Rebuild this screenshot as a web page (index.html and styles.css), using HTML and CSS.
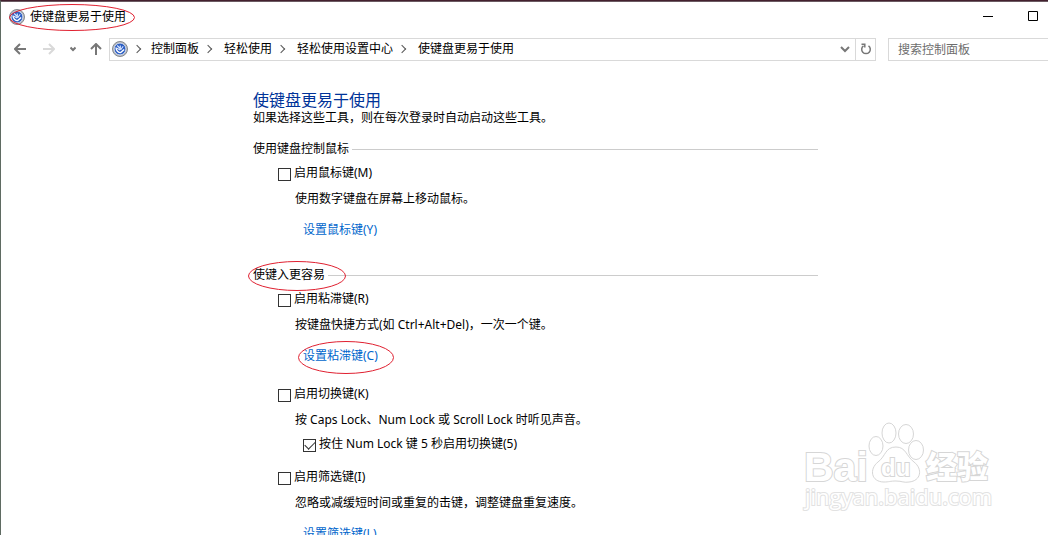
FILE: index.html
```
<!DOCTYPE html>
<html lang="zh-CN">
  <head>
    <meta charset="UTF-8" />
    <meta name="viewport" content="width=device-width, initial-scale=1.0" />
    <title>使键盘更易于使用</title>
    <link rel="stylesheet" href="styles.css">
  </head>
  <body>
    <!-- Shared icon -->
    <svg class="symbols" aria-hidden="true">
      <symbol id="ease" viewBox="0 0 16 16">
        <circle cx="8" cy="8" r="7.5" fill="#b4b8bd" stroke="#85898f" />
        <circle cx="8" cy="8" r="5.9" fill="#2d5fc4" stroke="#e4eaf5" stroke-width="0.8" />
        <path d="M4 6.5c.3 3.2 2.2 5.1 5 5.1M8.8 11.600l3.300-3.200" fill="none" stroke="#fff" stroke-width="1.400" />
        <path d="M5.200 4.500l3 3M8.300 4.500v4M4.900 7.200l3.300 1.800M11.200 5.200L8.700 8.700" fill="none" stroke="#dce8ff" stroke-width="1.100" />
      </symbol>
    </svg>

    <div class="window">
      <header class="titlebar">
        <div class="window-title marked">
          <svg class="icon"><use href="#ease" /></svg>
          <span>使键盘更易于使用</span>
          <svg class="mark mark-title" viewBox="0 0 126 27" preserveAspectRatio="none"><ellipse cx="63" cy="13.500" rx="62.500" ry="13" /></svg>
        </div>
        <div class="window-buttons">
          <button type="button" aria-label="最小化"><svg width="10" height="10"><path d="M0 5.500h10" /></svg></button>
          <button type="button" aria-label="最大化"><svg width="10" height="10"><path d="M.5.500h9v9h-9z" /></svg></button>
        </div>
      </header>

      <nav class="navbar">
        <button type="button" class="nav-back" aria-label="后退"><svg width="12" height="12"><path d="M12 6H1M6 1L1 6l5 5" /></svg></button>
        <button type="button" class="nav-forward" aria-label="前进"><svg width="12" height="12"><path d="M0 6h11M6 1l5 5-5 5" /></svg></button>
        <button type="button" class="nav-recent" aria-label="最近浏览的位置"><svg width="6" height="6"><path d="M.5 1.500L3 4l2.500-2.500" /></svg></button>
        <button type="button" class="nav-up" aria-label="上移"><svg width="12" height="12"><path d="M6 12V1M1 6l5-5 5 5" /></svg></button>

        <div class="address">
          <svg class="icon"><use href="#ease" /></svg>
          <ol class="crumbs">
            <li><a href="#">控制面板</a></li>
            <li><a href="#">轻松使用</a></li>
            <li><a href="#">轻松使用设置中心</a></li>
            <li><a href="#">使键盘更易于使用</a></li>
          </ol>
          <button type="button" class="history" aria-label="以前的位置"><svg width="10" height="8"><path d="M1 2l4 4 4-4" /></svg></button>
          <button type="button" class="refresh" aria-label="刷新"><svg width="12" height="12"><path d="M8.500 2.800A4.300 4.300 0 1 1 3.500 2.800M1.500 1.200h3.300v3.300" /></svg></button>
        </div>
        <input type="text" class="search" placeholder="搜索控制面板" aria-label="搜索控制面板" />
      </nav>

      <main class="content">
        <h1>使键盘更易于使用</h1>
        <p class="intro">如果选择这些工具，则在每次登录时自动启动这些工具。</p>

        <section>
          <h2><span>使用键盘控制鼠标</span></h2>
          <label class="option"><input type="checkbox" />启用鼠标键(M)</label>
          <p class="desc">使用数字键盘在屏幕上移动鼠标。</p>
          <a class="setup" href="#">设置鼠标键(Y)</a>
        </section>

        <section>
          <h2 class="marked">
            <span>使键入更容易</span>
            <svg class="mark mark-heading" viewBox="0 0 98 30" preserveAspectRatio="none"><ellipse cx="49" cy="15" rx="48.500" ry="14.500" /></svg>
          </h2>
          <label class="option"><input type="checkbox" />启用粘滞键(R)</label>
          <p class="desc">按键盘快捷方式(如 Ctrl+Alt+Del)，一次一个键。</p>
          <a class="setup marked" href="#">设置粘滞键(C)
            <svg class="mark mark-link" viewBox="0 0 96 33" preserveAspectRatio="none"><ellipse cx="48" cy="16.500" rx="47.500" ry="16" /></svg>
          </a>

          <label class="option next"><input type="checkbox" />启用切换键(K)</label>
          <p class="desc">按 Caps Lock、Num Lock 或 Scroll Lock 时听见声音。</p>
          <label class="option sub"><input type="checkbox" checked />按住 Num Lock 键 5 秒启用切换键(5)</label>

          <label class="option after-sub"><input type="checkbox" />启用筛选键(I)</label>
          <p class="desc">忽略或减缓短时间或重复的击键，调整键盘重复速度。</p>
          <a class="setup" href="#">设置筛选键(L)</a>
        </section>
      </main>

      <!-- Watermark -->
      <svg class="watermark" width="200" height="100" viewBox="0 0 200 100" role="img" aria-label="Baidu 经验 jingyan.baidu.com">
        <text class="wm-latin" x="3" y="61">Bai</text>
        <ellipse cx="75" cy="26" rx="7" ry="9.500" />
        <ellipse cx="88" cy="13" rx="7" ry="10" />
        <ellipse cx="105" cy="14" rx="7.500" ry="9.500" />
        <ellipse cx="115" cy="30" rx="7.500" ry="9.500" />
        <path d="M95 27c-11 0-10 9-18 15-9 7-7 20 6 20 5 0 6-1 12-1s8 2 13 1c12-1 14-13 5-20-8-6-8-15-18-15z" />
        <text class="wm-du" x="80" y="56">du</text>
        <text class="wm-cjk" x="125" y="58">经验</text>
        <text class="wm-url" x="4" y="85">jingyan.baidu.com</text>
      </svg>
    </div>
  </body>
</html>
```
FILE: styles.css
```
* {
  box-sizing: border-box;
}

body {
  margin: 0;
  font-family: "Noto Sans", "Noto Sans CJK SC", sans-serif;
  font-size: 12px;
  line-height: 16px;
  color: #000;
  background-color: #fff;
}

h1,
h2,
p,
ol {
  margin: 0;
  padding: 0;
  font-weight: normal;
}

a {
  text-decoration: none;
}

button {
  display: flex;
  align-items: center;
  justify-content: center;
  padding: 0;
  border: none;
  background: none;
}

button svg {
  fill: none;
  stroke: #777;
  stroke-width: 2;
}

.symbols {
  display: none;
}

.icon {
  width: 16px;
  height: 16px;
  flex: none;
}

.window {
  position: relative;
  height: 100vh;
  overflow: hidden;
  border-top: 1px solid #43202e;
  border-left: 1px solid #5f6b62;
}

/* Title bar */
.titlebar {
  display: flex;
  justify-content: space-between;
  height: 31px;
  border-top: 1px solid #6b5a62;
}

.window-title {
  display: flex;
  align-items: center;
  gap: 5px;
  padding-left: 8px;
}

.window-buttons {
  display: flex;
}

.window-buttons button {
  width: 45px;
  height: 28px;
}

.window-buttons button:last-child {
  width: 46px;
  margin-right: -8px;
}

.window-buttons svg {
  stroke: #000;
  stroke-width: 1;
}

/* Navigation */
.navbar {
  display: flex;
  align-items: center;
  height: 34px;
  padding-left: 13px;
}

.nav-back,
.nav-forward {
  margin-right: 17px;
}

.nav-forward svg {
  stroke: #d9d9d9;
}

.nav-forward {
  margin-right: 15px;
}

.nav-recent {
  margin-right: 14px;
}

.navbar .nav-recent svg {
  stroke-width: 2;
}

.nav-up {
  margin-right: 7px;
}

.address {
  display: flex;
  flex: 1;
  align-items: center;
  height: 23px;
  padding-left: 2px;
  border: 1px solid #d9d9d9;
}

.crumbs {
  display: flex;
  flex: 1;
  list-style: none;
}

.crumbs li {
  display: flex;
  align-items: center;
}

.crumbs li::before {
  content: "";
  width: 5px;
  height: 5px;
  margin: 0 13px 0 6px;
  border-top: 1px solid #555;
  border-right: 1px solid #555;
  transform: rotate(45deg);
}

.crumbs li:first-child::before {
  margin-right: 11px;
}

.crumbs a {
  color: #000;
}

.history {
  width: 20px;
  height: 21px;
}

.refresh {
  width: 20px;
  height: 21px;
  border-left: 1px solid #d9d9d9;
}

.address .refresh svg {
  stroke-width: 1.5;
}

.search {
  width: 160px;
  height: 23px;
  margin-left: 12px;
  padding: 0 9px;
  border: 1px solid #d9d9d9;
  border-right: none;
  font: inherit;
}

.search::placeholder {
  color: #6d6d6d;
}

/* Settings */
.content {
  max-width: 817px;
  padding: 24px 0 16px 252px;
}

h1 {
  font-size: 16px;
  line-height: 20px;
  color: #003399;
}

section {
  margin-top: 29px;
}

.intro + section {
  margin-top: 15px;
}

h2 {
  display: flex;
  align-items: center;
  gap: 3px;
  font-size: 12px;
  line-height: 16px;
}

h2::after {
  content: "";
  flex: 1;
  height: 1px;
  background-color: #ccc;
}

.option {
  display: flex;
  align-items: center;
  gap: 3px;
  margin: 8px 0 0 25px;
}

.option input {
  display: grid;
  place-items: center;
  appearance: none;
  width: 13px;
  height: 13px;
  margin: 2px 0 0;
  border: 1px solid #333;
  background-color: #fff;
}

.option input:checked::before {
  content: "";
  width: 9px;
  height: 5px;
  margin-bottom: 3px;
  border-left: 1px solid #333;
  border-bottom: 1px solid #333;
  transform: rotate(-45deg);
}

.option.next {
  margin-top: 22px;
}

.option.sub {
  margin-left: 50px;
}

.option.after-sub {
  margin-top: 17px;
}

.desc {
  margin: 10px 0 0 42px;
}

.setup {
  display: block;
  width: fit-content;
  margin: 15px 0 0 50px;
  color: #0066cc;
}

/* Red rings around the highlighted items */
.marked {
  position: relative;
}

.mark {
  position: absolute;
  overflow: visible;
  fill: none;
  stroke: #e02030;
  stroke-width: 1;
  pointer-events: none;
}

.mark-title {
  left: 8px;
  top: 2px;
  width: 126px;
  height: 27px;
}

.mark-heading {
  left: -5px;
  top: -6px;
  width: 98px;
  height: 30px;
}

.mark-link {
  left: -5px;
  top: -7px;
  width: 96px;
  height: 33px;
}

/* Watermark */
.watermark {
  position: absolute;
  right: 47px;
  bottom: 15px;
  fill: #fff;
  stroke: #d6d6d6;
  stroke-width: 1;
}

.watermark text {
  paint-order: stroke;
  stroke-width: 2;
}

.wm-latin {
  font: bold 41px "Liberation Sans", sans-serif;
}

.wm-du {
  font: bold 24px "Liberation Sans", sans-serif;
}

.wm-cjk {
  font: 900 31px "Noto Sans CJK SC", sans-serif;
}

.watermark .wm-url {
  font: 22px "Open Sans", sans-serif;
  stroke: #e2e2e2;
}
```
